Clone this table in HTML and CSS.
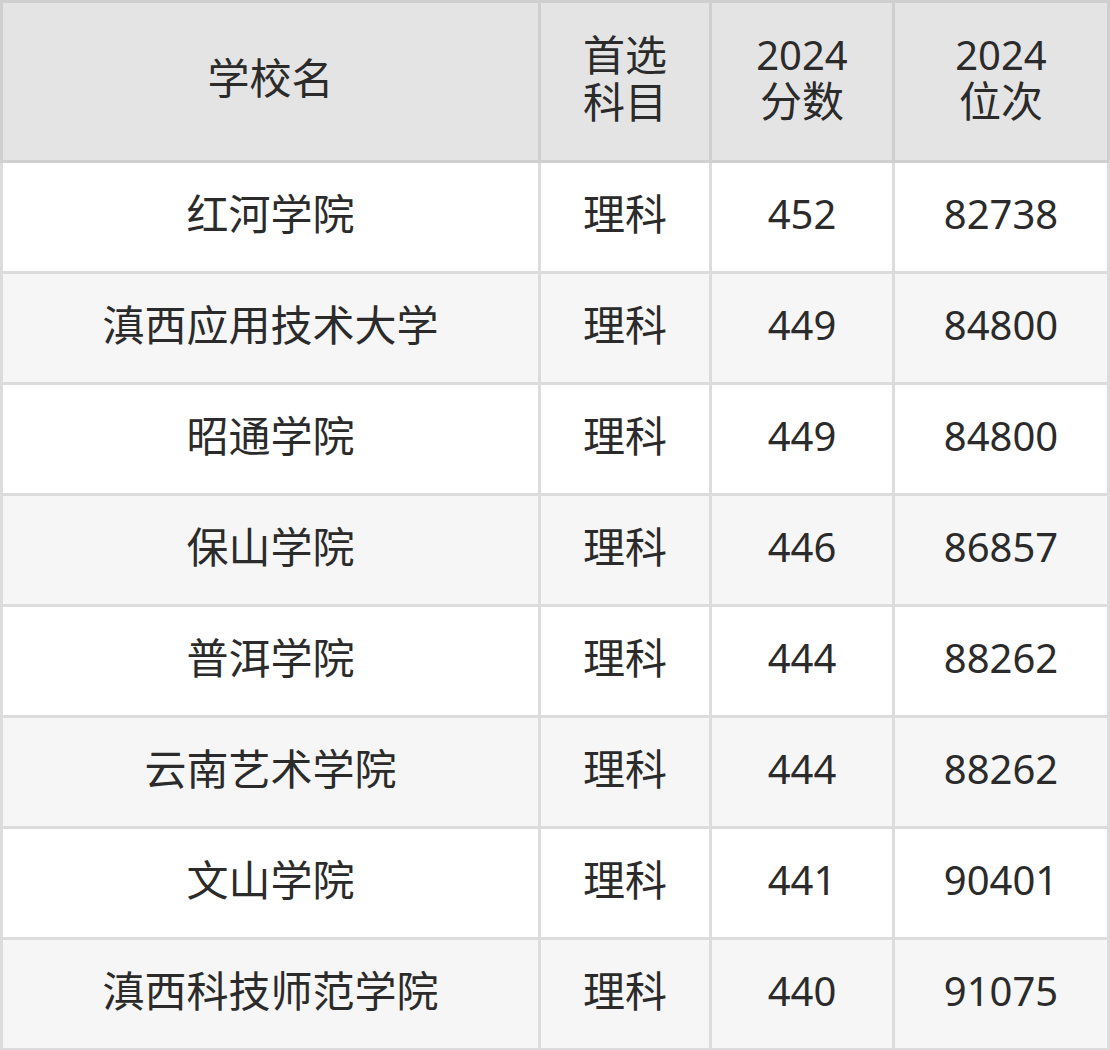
FILE: index.html
```html
<!DOCTYPE html>
<html lang="zh-CN">
<head>
<meta charset="utf-8">
<link rel="stylesheet" href="styles.css">
</head>
<body>
<table class="score-table">
  <colgroup>
    <col class="c-name">
    <col class="c-subj">
    <col class="c-score">
    <col class="c-rank">
  </colgroup>
  <thead>
    <tr>
      <th><span class="zh">学校名</span></th>
      <th><span class="zh">首选</span><br><span class="zh">科目</span></th>
      <th>2024<br><span class="zh">分数</span></th>
      <th>2024<br><span class="zh">位次</span></th>
    </tr>
  </thead>
  <tbody>
    <tr><td class="zh">红河学院</td><td class="zh">理科</td><td>452</td><td>82738</td></tr>
    <tr><td class="zh">滇西应用技术大学</td><td class="zh">理科</td><td>449</td><td>84800</td></tr>
    <tr><td class="zh">昭通学院</td><td class="zh">理科</td><td>449</td><td>84800</td></tr>
    <tr><td class="zh">保山学院</td><td class="zh">理科</td><td>446</td><td>86857</td></tr>
    <tr><td class="zh">普洱学院</td><td class="zh">理科</td><td>444</td><td>88262</td></tr>
    <tr><td class="zh">云南艺术学院</td><td class="zh">理科</td><td>444</td><td>88262</td></tr>
    <tr><td class="zh">文山学院</td><td class="zh">理科</td><td>441</td><td>90401</td></tr>
    <tr><td class="zh">滇西科技师范学院</td><td class="zh">理科</td><td>440</td><td>91075</td></tr>
  </tbody>
</table>
</body>
</html>
```

FILE: styles.css
```css
html, body {
  margin: 0;
  padding: 0;
  background: #ffffff;
}

.score-table {
  width: 1110px;
  table-layout: fixed;
  border-collapse: collapse;
  font-family: "Noto Sans", "Noto Sans CJK SC", sans-serif;
  font-size: 40px;
  line-height: 46px;
  color: #2b2b2b;
}

.c-name { width: 538px; }
.c-subj { width: 171px; }
.c-score { width: 183px; }
.c-rank { width: 215px; }

.score-table th,
.score-table td {
  padding: 0 0 6px 0;
  text-align: center;
  vertical-align: middle;
}

.score-table th {
  font-weight: normal;
  background: #e4e4e4;
  border: 3px solid #cfcfcf;
  height: 151px;
}

.score-table td {
  border: 3px solid #dcdcdc;
  height: 102px;
}

.score-table .zh {
  font-size: 42px;
}

.score-table tbody tr:nth-child(even) td {
  background: #f6f6f6;
}
```
